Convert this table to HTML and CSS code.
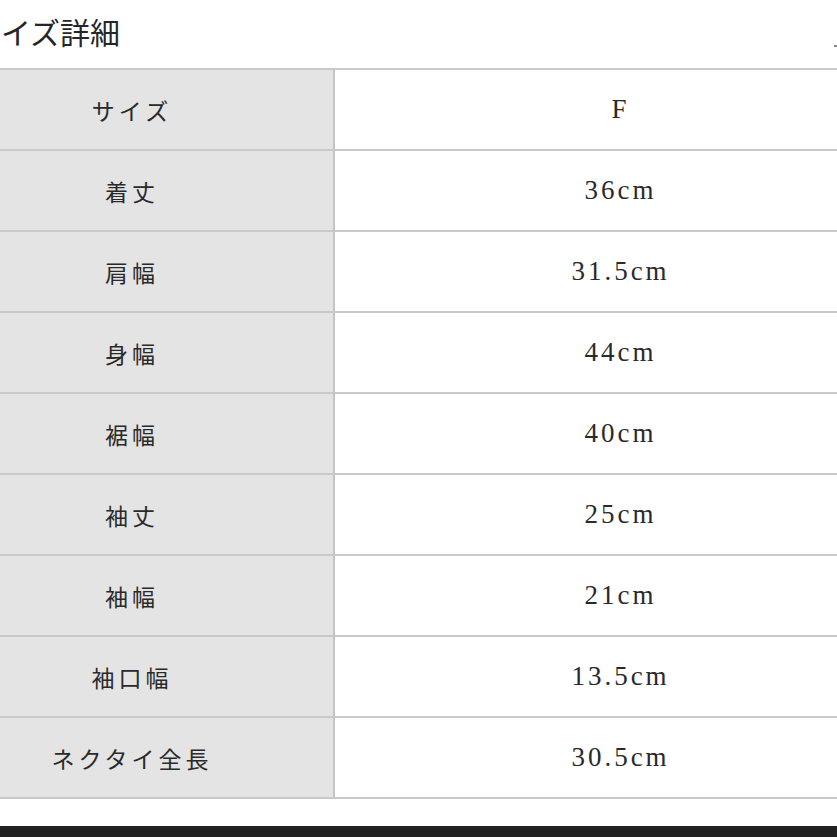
FILE: index.html
```html
<!DOCTYPE html>
<html lang="ja">
<head>
<meta charset="utf-8">
<link rel="stylesheet" href="styles.css">
</head>
<body>
<div class="page">
  <div class="title-row">
    <h1 class="title">イズ詳細</h1>
    <span class="edge-mark"></span>
  </div>
  <div class="size-table">
    <div class="cell label">サイズ</div><div class="cell value">F</div>
    <div class="cell label">着丈</div><div class="cell value">36cm</div>
    <div class="cell label">肩幅</div><div class="cell value">31.5cm</div>
    <div class="cell label">身幅</div><div class="cell value">44cm</div>
    <div class="cell label">裾幅</div><div class="cell value">40cm</div>
    <div class="cell label">袖丈</div><div class="cell value">25cm</div>
    <div class="cell label">袖幅</div><div class="cell value">21cm</div>
    <div class="cell label">袖口幅</div><div class="cell value">13.5cm</div>
    <div class="cell label">ネクタイ全長</div><div class="cell value">30.5cm</div>
  </div>
  <div class="spacer"></div>
  <div class="bottom-bar"></div>
</div>
</body>
</html>
```
FILE: styles.css
```css
html, body {
  margin: 0;
  padding: 0;
  background: #ffffff;
  overflow: hidden;
}
.page {
  width: 837px;
  height: 837px;
  display: flex;
  flex-direction: column;
  overflow: hidden;
}
.title-row {
  height: 68px;
  display: flex;
  align-items: flex-start;
  justify-content: space-between;
}
.title {
  margin: 11px 0 0 1px;
  font-family: "Noto Sans CJK JP", sans-serif;
  font-weight: 400;
  font-size: 30px;
  line-height: 40px;
  color: #262626;
  letter-spacing: 0;
}
.edge-mark {
  width: 3px;
  height: 2px;
  background: #888;
  margin-top: 45px;
}
.size-table {
  display: grid;
  grid-template-columns: 406px 566px;
  grid-auto-rows: 81px;
  width: 972px;
  margin-left: -71px;
  border-top: 2px solid #c9c9c9;
  flex: none;
}
.cell {
  box-sizing: border-box;
  border-bottom: 2px solid #c9c9c9;
  display: flex;
  align-items: center;
  justify-content: center;
  color: #2a2a2a;
}
.label {
  background: #e4e4e4;
  border-right: 2px solid #c4c4c4;
  font-family: "Noto Sans CJK JP", sans-serif;
  font-size: 23px;
  letter-spacing: 4px;
  padding-left: 2px;
}
.value {
  background: #ffffff;
  font-family: "Liberation Serif", "Times New Roman", serif;
  font-size: 27px;
  letter-spacing: 3px;
  padding-left: 5px;
}
.spacer {
  flex: 1;
}
.bottom-bar {
  height: 11px;
  background: #222222;
  flex: none;
}
```
